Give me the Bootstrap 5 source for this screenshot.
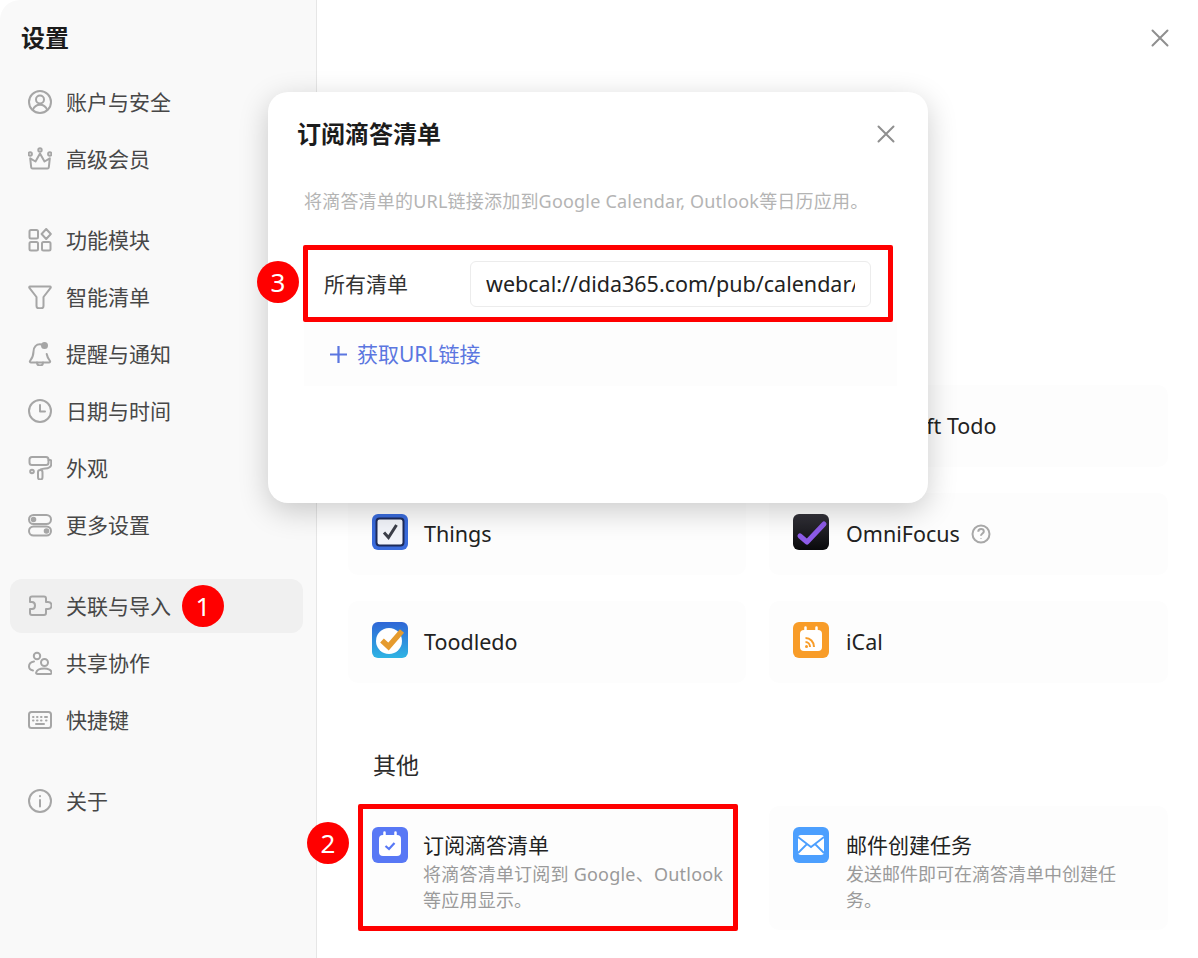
<!DOCTYPE html>
<html lang="zh-CN">
<head>
    <meta charset="UTF-8">
    <meta name="viewport" content="width=device-width, initial-scale=1.0">
    <title>设置</title>
    <link href="https://cdn.jsdelivr.net/npm/bootstrap@5.3.0/dist/css/bootstrap.min.css" rel="stylesheet">
    <style>
        html, body { height: 100%; overflow: hidden; }
        body { font-family: "Noto Sans", "Noto Sans CJK SC", sans-serif; background: #fff; color: #222; }
        .app-shell { width: 1198px; height: 958px; }

        .side-panel { width: 317px; flex: none; background: #f9f9f9; border-right: 1px solid #e6e6e6; border-top-left-radius: 20px; padding: 19px 13px 0 10px; }
        .side-title { font-size: 24px; line-height: 38px; font-weight: 700; color: #1c1c1c; margin: 0 0 18px 11px; }
        .side-group { margin-bottom: 27px; }
        .side-link { display: flex; align-items: center; gap: 14px; height: 54px; margin-bottom: 3px; padding-left: 18px; border-radius: 12px; font-size: 21px; color: #474747; }
        .side-link.on { background: #f0f0f0; }
        .side-link svg { width: 24px; height: 24px; flex: none; fill: none; stroke: #a6a6a6; stroke-width: 2; stroke-linecap: round; stroke-linejoin: round; }
        .side-text { padding-top: 2px; }

        .main-panel { flex: 1; padding: 385px 30px 0 31px; }
        .close-main { position: absolute; top: 29px; right: 29px; }
        .close-x { width: 18px; height: 18px; stroke: #8f8f8f; stroke-width: 2; stroke-linecap: round; fill: none; }
        .app-grid { display: grid; grid-template-columns: 398px 399px; column-gap: 23px; row-gap: 26px; }
        .app-tile { height: 82px; background: #fdfdfd; border-radius: 10px; padding-left: 24px; display: flex; align-items: center; gap: 16px; font-size: 21.5px; color: #222; white-space: nowrap; }
        .app-tile:nth-child(even) { gap: 17px; }
        .app-tile > .app-logo { margin-top: -4px; }
        .app-tile.tall { height: 124px; align-items: flex-start; padding-top: 21px; }
        .app-tile.tall > .app-logo { margin-top: 0; }
        .app-logo { width: 36px; height: 36px; flex: none; display: block; }
        .help-mark { width: 20px; height: 20px; margin-left: -6px; fill: none; stroke: #a8a8a8; stroke-width: 2; }
        .section-head { font-size: 23px; line-height: 32px; color: #2b2b2b; margin: 66px 0 25px 25px; }
        .tile-title { font-size: 21px; line-height: 30px; color: #222; margin-top: 3px; }
        .tile-sub { font-size: 18px; line-height: 26px; color: #9a9a9a; margin-top: 1px; }
        .red-frame .tile-sub { letter-spacing: .22px; }

        .sub-dialog { position: absolute; left: 268px; top: 92px; width: 660px; height: 411px; background: #fff; border-radius: 20px; box-shadow: 0 8px 30px rgba(0, 0, 0, .2); padding: 0 36px; }
        .dialog-title { font-size: 24px; line-height: 34px; font-weight: 700; color: #1c1c1c; margin: 25px 0 0 -7px; }
        .close-dialog { position: absolute; top: 33px; right: 33px; }
        .dialog-desc { font-size: 18px; line-height: 26px; color: #b4b4b4; margin: 37px 0 0 0; white-space: nowrap; letter-spacing: .2px; }
        .feed-row { position: relative; width: 590px; height: 77px; margin: 31px 0 0 -1px; border: 5px solid #f00; border-radius: 2px; display: flex; align-items: center; padding-left: 16px; font-size: 21px; color: #333; }
        .feed-label { width: 146px; flex: none; padding-top: 2px; }
        .feed-input { width: 401px; height: 46px; flex: none; border: 1px solid #ececec; border-radius: 6px; padding: 0 15px; font-size: 21.5px; color: #222; }
        .feed-input:focus { border-color: #ececec; box-shadow: none; color: #222; }
        .add-link { height: 64px; width: 593px; background: #fdfdfd; display: flex; align-items: center; gap: 9px; padding-left: 25px; font-size: 21px; color: #5b76e0; text-decoration: none; }
        .add-link span { padding-top: 2px; }
        .add-link svg { width: 19px; height: 19px; stroke: #5b76e0; stroke-width: 2.2; fill: none; }

        .red-dot { width: 42px; height: 42px; border-radius: 50%; background: #f00; color: #fff; font-size: 26px; display: flex; align-items: center; justify-content: center; flex: none; }
        .dot-one { margin-left: -3px; }
        .dot-two { position: absolute; left: -51px; top: 18px; }
        .dot-three { position: absolute; left: -51px; top: 11px; }
        .red-frame { position: relative; outline: 5px solid #f00; outline-offset: -5px; border-radius: 2px; width: 380px; margin: -2px 0 0 10px; height: 127px; padding: 23px 0 0 14px; background: #fdfdfd; display: flex; gap: 15px; }
    </style>
</head>
<body>
    <div class="app-shell d-flex position-relative">
        <aside class="side-panel">
            <h1 class="side-title">设置</h1>
            <div class="side-group">
                <div class="side-link"><svg viewBox="0 0 24 24"><circle cx="12" cy="12" r="11"/><circle cx="12" cy="9.500" r="4"/><path d="M4.800 20c1.400-3.600 4-5.200 7.200-5.200s5.800 1.600 7.200 5.200"/></svg><span class="side-text">账户与安全</span></div>
                <div class="side-link"><svg viewBox="0 0 24 24"><path d="M4.500 21.500h15c.8 0 1.200-.5 1.300-1.200l1-9-5.300 3.200L12 6.500l-4.500 8-5.300-3.200 1 9c.1.700.5 1.200 1.300 1.200z"/><circle cx="2.200" cy="7" r="1.700"/><circle cx="12" cy="3" r="1.700"/><circle cx="21.800" cy="7" r="1.700"/></svg><span class="side-text">高级会员</span></div>
            </div>
            <div class="side-group">
                <div class="side-link"><svg viewBox="0 0 24 24"><rect x="1.500" y="2" width="8.500" height="8.500" rx="1.500"/><rect x="1.500" y="14" width="8.500" height="8.500" rx="1.500"/><rect x="14" y="14" width="8.500" height="8.500" rx="1.500"/><path d="m18.200 1 4.600 5-4.600 5-4.600-5z"/></svg><span class="side-text">功能模块</span></div>
                <div class="side-link"><svg viewBox="0 0 24 24"><path d="M2 1.500h20c.8 0 1 .8.600 1.400L15.500 12v9c0 1.500-1 2.300-2.500 2.300h-2c-1.500 0-2.500-.8-2.500-2.300v-9L1.400 2.900C1 2.300 1.200 1.500 2 1.500z"/></svg><span class="side-text">智能清单</span></div>
                <div class="side-link"><svg viewBox="0 0 24 24"><path d="M13.500 2.500C8 1.500 5.500 5.500 5.500 9.500c0 4-1.500 7-3.500 9.500-.5.800 0 1.500 1 1.500h18c1 0 1.500-.7 1-1.500-1.500-2-2.800-4-3.300-7"/><path d="M9 20.500c0 2 1.500 3 3 3s3-1 3-3"/><circle cx="16.500" cy="3.500" r="2.500" fill="#a6a6a6"/></svg><span class="side-text">提醒与通知</span></div>
                <div class="side-link"><svg viewBox="0 0 24 24"><circle cx="12" cy="12" r="11"/><path d="M12 6v6.500h5"/></svg><span class="side-text">日期与时间</span></div>
                <div class="side-link"><svg viewBox="0 0 24 24"><rect x="1.500" y="1" width="19" height="8" rx="2.500"/><path d="M20.500 4h1.500c.8 0 1.200.5 1.200 1.200v3c0 3-3 4-6 4.300-2 .2-3.500.5-4.500 1"/><rect x="10" y="14" width="4.500" height="9.500" rx="2.200"/><circle cx="4" cy="15.500" r="1.800"/></svg><span class="side-text">外观</span></div>
                <div class="side-link"><svg viewBox="0 0 24 24"><rect x="1" y="2" width="22" height="9" rx="4.500"/><rect x="1" y="13.500" width="22" height="9" rx="4.500"/><circle cx="5.500" cy="6.500" r="1.800" fill="#a6a6a6"/><circle cx="18.500" cy="18" r="1.800" fill="#a6a6a6"/></svg><span class="side-text">更多设置</span></div>
            </div>
            <div class="side-group">
                <div class="side-link on"><svg viewBox="0 0 24 24"><path d="M2 4.500c0-1.200.8-2 2-2h12c1.200 0 2 .8 2 2v3.500h2c2 0 3.500 1.500 3.500 3.500s-1.500 3.500-3.500 3.500h-2v4c0 1.200-.8 2-2 2H4c-1.200 0-2-.8-2-2v-4h2c1.500 0 3-1.200 3-3.500S5.500 8 4 8H2z"/></svg><span class="side-text">关联与导入</span><span class="red-dot dot-one">1</span></div>
                <div class="side-link"><svg viewBox="0 0 24 24"><circle cx="9" cy="5" r="3.200"/><circle cx="16.500" cy="11.500" r="3.500"/><path d="M5 19.500c-2.500-.5-4-2-4-4 0-2.500 2-4.500 5-5"/><path d="M9.500 23c-1 0-1.500-.7-1.300-1.500.6-2.500 4-4 8-4s7.400 1.500 7.300 4c0 .8-.5 1.500-1.300 1.500z"/></svg><span class="side-text">共享协作</span></div>
                <div class="side-link"><svg viewBox="0 0 24 24"><rect x="1" y="4" width="22" height="16" rx="2.500"/><path d="M5 9h.5M9 9h.5M13 9h.5M17 9h2M5 12.500h.5M9 12.500h.5M13 12.500h.5M18 12.500h.5M8 16h8"/></svg><span class="side-text">快捷键</span></div>
            </div>
            <div class="side-group">
                <div class="side-link"><svg viewBox="0 0 24 24"><circle cx="12" cy="12" r="11"/><path d="M12 11v6.500M12 7v.2"/></svg><span class="side-text">关于</span></div>
            </div>
        </aside>

        <main class="main-panel">
            <svg class="close-x close-main" viewBox="0 0 18 18"><path d="M1.500 1.500l15 15M16.500 1.500l-15 15"/></svg>
            <div class="app-grid">
                <div class="app-tile"></div>
                <div class="app-tile"><span class="app-logo"></span>Microsoft Todo</div>
                <div class="app-tile">
                    <svg class="app-logo" viewBox="0 0 36 36"><rect width="36" height="36" rx="6" fill="#3a6bdc"/><rect x="4.500" y="4.500" width="27" height="27" rx="3" fill="#f2f4fa" stroke="#1d2b5a" stroke-width="2"/><path d="M12 18.500l4.500 5L24.500 11" fill="none" stroke="#3c3f4a" stroke-width="3"/></svg>
                    Things
                </div>
                <div class="app-tile">
                    <svg class="app-logo" viewBox="0 0 36 36"><defs><linearGradient id="ofg" x1="0" y1="0" x2="0" y2="1"><stop offset="0" stop-color="#33323a"/><stop offset="1" stop-color="#09090b"/></linearGradient></defs><rect width="36" height="36" rx="6" fill="url(#ofg)"/><path d="M7 22l7 6L31 10" fill="none" stroke="#8d5be8" stroke-width="5" stroke-linejoin="round" stroke-linecap="round"/></svg>
                    OmniFocus
                    <svg class="help-mark" viewBox="0 0 20 20"><circle cx="10" cy="10" r="8.500"/><path d="M7.300 7.800c0-1.700 1.200-2.700 2.800-2.700s2.700 1 2.700 2.400c0 2-2.800 2-2.800 4.200M10 14v.6"/></svg>
                </div>
                <div class="app-tile">
                    <svg class="app-logo" viewBox="0 0 36 36"><defs><linearGradient id="tdg" x1="0" y1="0" x2="0" y2="1"><stop offset="0" stop-color="#2f66d6"/><stop offset="1" stop-color="#2fb4e4"/></linearGradient></defs><rect width="36" height="36" rx="6" fill="url(#tdg)"/><circle cx="17" cy="19" r="13" fill="#fff"/><path d="M10 18.500l6.500 6L30 9" fill="none" stroke="#e59b2e" stroke-width="5.500"/></svg>
                    Toodledo
                </div>
                <div class="app-tile">
                    <svg class="app-logo" viewBox="0 0 36 36"><rect width="36" height="36" rx="6" fill="#f89c28"/><rect x="7" y="8" width="22" height="21" rx="4" fill="#fff"/><path d="M12.500 5.500v5M23.500 5.500v5" stroke="#fff" stroke-width="2.500" stroke-linecap="round"/><path d="M12.500 16c4.500 0 8.500 3.500 8.500 9M12.500 20c2.500 0 4.500 2 4.500 5" fill="none" stroke="#f89c28" stroke-width="2"/><circle cx="13.500" cy="24.500" r="1.500" fill="#f89c28"/></svg>
                    iCal
                </div>
            </div>

            <h2 class="section-head fw-normal">其他</h2>
            <div class="app-grid">
                <div class="red-frame">
                    <span class="red-dot dot-two">2</span>
                    <svg class="app-logo" viewBox="0 0 36 36"><rect width="36" height="36" rx="6" fill="#5878f5"/><rect x="7" y="8" width="22" height="21" rx="4" fill="#fff"/><path d="M12.500 5.500v5M23.500 5.500v5" stroke="#fff" stroke-width="2.500" stroke-linecap="round"/><path d="M13.500 19l3.500 3 5.500-6" fill="none" stroke="#5878f5" stroke-width="2.200"/></svg>
                    <div>
                        <div class="tile-title">订阅滴答清单</div>
                        <div class="tile-sub text-nowrap">将滴答清单订阅到 Google、Outlook<br>等应用显示。</div>
                    </div>
                </div>
                <div class="app-tile tall">
                    <svg class="app-logo" viewBox="0 0 36 36"><rect width="36" height="36" rx="6" fill="#4c9ffe"/><rect x="5" y="8" width="26" height="20" rx="3" fill="#fff"/><path d="M5 10l13 10 13-10M5 26l9-9M31 26l-9-9" fill="none" stroke="#4c9ffe" stroke-width="1.800"/></svg>
                    <div>
                        <div class="tile-title">邮件创建任务</div>
                        <div class="tile-sub">发送邮件即可在滴答清单中创建任<br>务。</div>
                    </div>
                </div>
            </div>
        </main>

        <div class="sub-dialog">
            <h2 class="dialog-title">订阅滴答清单</h2>
            <svg class="close-x close-dialog" viewBox="0 0 18 18"><path d="M1.500 1.500l15 15M16.500 1.500l-15 15"/></svg>
            <p class="dialog-desc">将滴答清单的URL链接添加到Google Calendar, Outlook等日历应用。</p>
            <div class="feed-row">
                <span class="red-dot dot-three">3</span>
                <span class="feed-label">所有清单</span>
                <input class="form-control feed-input" type="text" readonly value="webcal://dida365.com/pub/calendar/feeds/all">
            </div>
            <a class="add-link" href="#"><svg viewBox="0 0 19 19"><path d="M9.500 1v17M1 9.500h17"/></svg><span>获取URL链接</span></a>
        </div>
    </div>

    <script src="https://cdn.jsdelivr.net/npm/bootstrap@5.3.0/dist/js/bootstrap.bundle.min.js"></script>
</body>
</html>
